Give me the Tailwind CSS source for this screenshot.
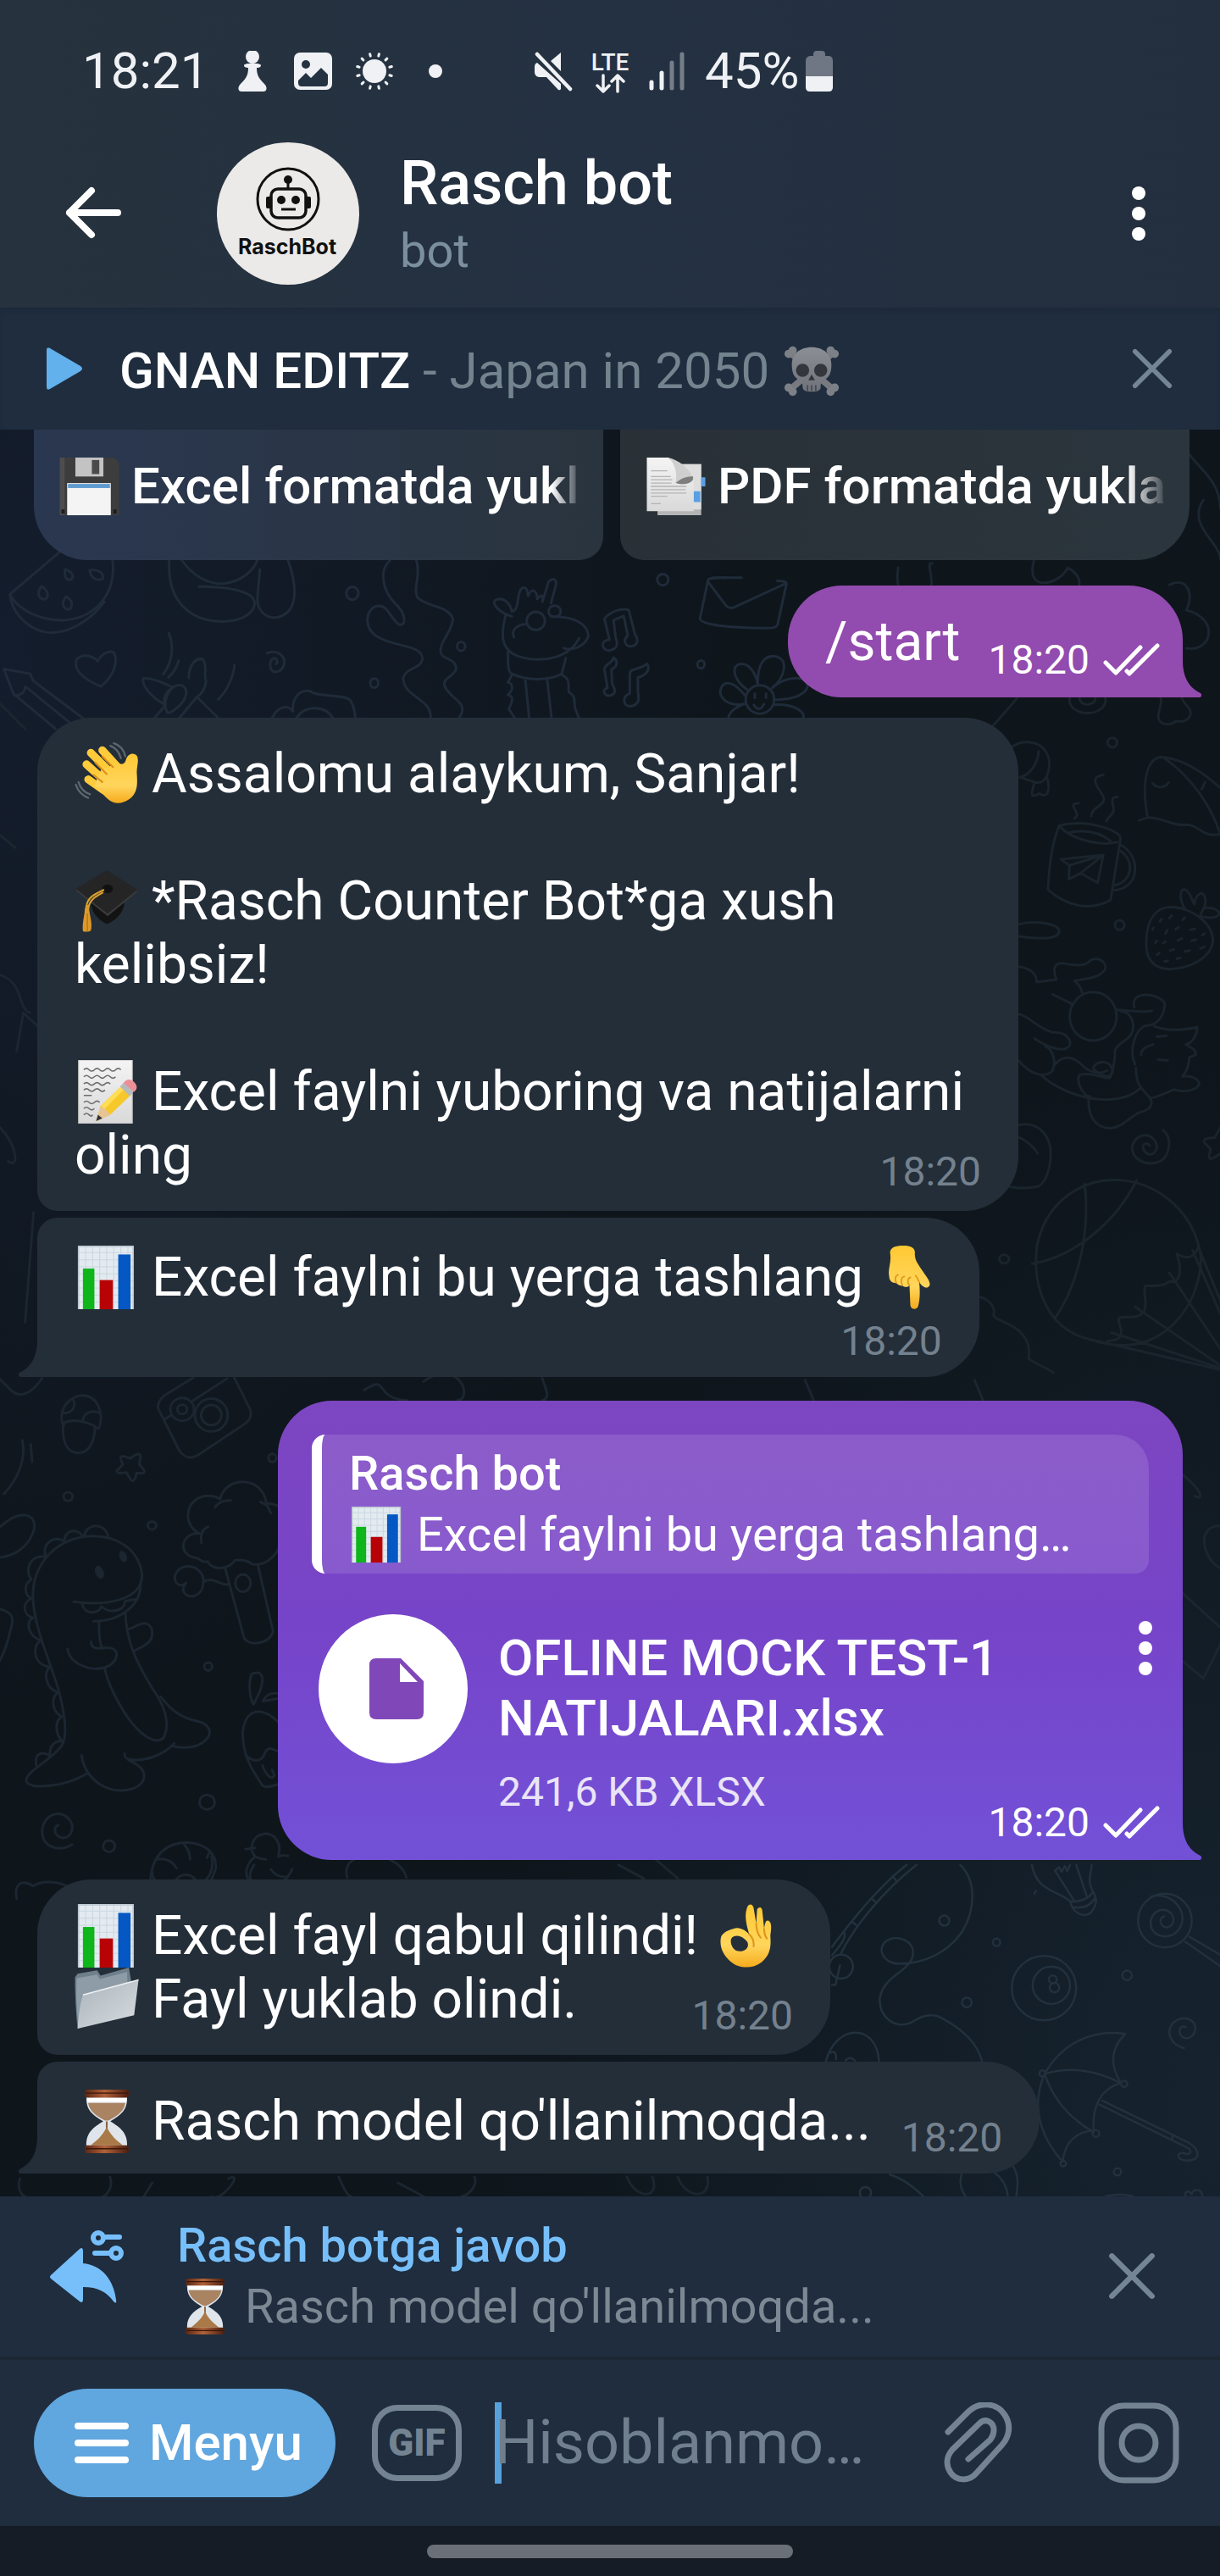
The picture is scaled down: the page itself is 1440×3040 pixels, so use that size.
<!DOCTYPE html>
<html lang="uz">
<head>
<meta charset="utf-8">
<meta name="viewport" content="width=device-width, initial-scale=1">
<title>Rasch bot</title>
<script src="https://cdn.jsdelivr.net/npm/@tailwindcss/browser@4"></script>
</head>
<body class="bg-[#0f161d] font-['Roboto',sans-serif] text-white">

<!-- Shared emoji and icon symbols -->
<svg class="absolute h-0 w-0" aria-hidden="true">
  <defs>
    <linearGradient id="skin" x1="0" y1="0" x2="0" y2="1"><stop offset="0" stop-color="#ffc933"/><stop offset=".65" stop-color="#ffd55c"/><stop offset="1" stop-color="#f6ab1c"/></linearGradient>
    <linearGradient id="silver" x1="0" y1="0" x2="1" y2="1"><stop offset="0" stop-color="#aab4bb"/><stop offset="1" stop-color="#d8dde1"/></linearGradient>
    <linearGradient id="paper" x1="0" y1="0" x2="0" y2="1"><stop offset="0" stop-color="#f4f4f4"/><stop offset="1" stop-color="#d9d9d9"/></linearGradient>
    <linearGradient id="wood" x1="0" y1="0" x2="1" y2="0"><stop offset="0" stop-color="#5a2613"/><stop offset=".45" stop-color="#b0623a"/><stop offset="1" stop-color="#4a1e0f"/></linearGradient>
    <linearGradient id="skullFill" x1="0" y1="0" x2="0" y2="1"><stop offset="0" stop-color="#8b8f95"/><stop offset="1" stop-color="#6f7379"/></linearGradient>
  </defs>
  <symbol id="e-chart" viewBox="0 0 72 72">
    <rect x="4" y="0" width="62" height="72" fill="#e3ebf1"/>
    <path d="M4 8H66M4 16H66M4 24H66M4 32H66M4 40H66M4 48H66M4 56H66M4 64H66M12 0V72M20 0V72M28 0V72M36 0V72M44 0V72M52 0V72M60 0V72" stroke="#cbd6df" stroke-width="1"/>
    <rect x="9" y="26" width="13" height="46" fill="#0eb51b"/><rect x="28" y="39" width="15" height="33" fill="#b80306"/><rect x="49" y="10" width="14" height="62" fill="#0558c3"/>
    <path d="M4 0V72M66 0V72M4 1H66" stroke="#b9c3cb" stroke-width="1.5" fill="none"/>
  </symbol>
  <symbol id="e-floppy" viewBox="0 0 72 72">
    <path d="M0 1H66L72 7V71H0Z" fill="#3d3d3d"/><path d="M0 1H6V71H0Z" fill="#4d4d4d"/>
    <rect x="19" y="1" width="34" height="23" fill="#c3c3c3"/><rect x="39" y="4" width="9" height="17" fill="#4a4a4a"/>
    <rect x="9" y="32" width="53" height="39" fill="#f4f4f4"/><rect x="10" y="33" width="51" height="5" fill="#5f9bd0"/>
    <rect x="2" y="64" width="4" height="5" fill="#1d1d1d"/><rect x="65" y="64" width="4" height="5" fill="#1d1d1d"/>
  </symbol>
  <symbol id="e-docs" viewBox="0 0 72 72">
    <path d="M14 9H67V71H14Z" fill="#b5b5b5"/><path d="M40 9H67V64H40Z" fill="#dedede"/>
    <path d="M67 25h5v11h-5zM56 42h10v13h-10z" fill="#5b9fe3"/>
    <path d="M1 1H27C38 8 42 20 58 27V66H1Z" fill="url(#paper)"/>
    <path d="M27 1C39 4 52 12 58 28C51 35 42 34 36 32C38 20 36 9 27 1Z" fill="#cfcfcf"/><path d="M36 32C40 28 49 23 57 24C59 30 50 36 36 32Z" fill="#7e7e7e"/>
    <path d="M6 17h20M6 24h24M6 28h26M6 32h25M6 36h43M6 40h42M6 44h43M6 48h20M6 57h12" stroke="#b4b4b4" stroke-width="1.3"/>
  </symbol>
  <symbol id="e-wave" viewBox="0 0 72 72">
    <g stroke="#ffcb3a" stroke-width="9" stroke-linecap="round" fill="none"><path d="M15 42L32 54M13 25L34 44M18 12L40 34M31 9L50 30"/></g>
    <path d="M24 44L30 30L50 24C54 26 57 24 58 19C60 13 66 11 70 15C73 20 70 27 70 34C71 48 71 57 62 64C52 71 44 70 37 64L22 50Z" fill="url(#skin)"/>
    <path d="M21 37L31 45M23 23L36 36M31 16L43 28" stroke="#d98e1c" stroke-width="2" stroke-linecap="round" fill="none"/>
    <path d="M40 4C46 6 50 11 52 18M44 1C51 3 56 9 57 16M4 45C6 52 11 57 17 59M1 48C3 55 9 61 15 63" stroke="#5e666e" stroke-width="2.2" fill="none" stroke-linecap="round"/>
  </symbol>
  <symbol id="e-cap" viewBox="0 0 72 72">
    <path d="M18 36C18 48 25 56 36 62C46 58 55 50 56 38Z" fill="#131313"/>
    <path d="M1 22L36 1L71 23L37 50Z" fill="#252525"/><path d="M1 22L37 50L71 23L70 26L37 53L2 25Z" fill="#3a3a3a"/>
    <ellipse cx="37" cy="22" rx="6" ry="5" fill="#111"/>
    <path d="M33 23C22 28 14 32 13 42M32 26C23 31 17 34 15 44" stroke="#d9a02f" stroke-width="2" fill="none"/>
    <path d="M12 41C15 39 17 42 16 45C17 53 20 62 18 69C16 71 12 71 9 70C8 60 11 52 11 46Z" fill="#dd9a2a"/><path d="M14 50V70" stroke="#a96a12"/>
  </symbol>
  <symbol id="e-memo" viewBox="0 0 72 72">
    <rect x="4" y="0" width="61" height="72" fill="url(#paper)" stroke="#bcbcbc"/>
    <path d="M10 11q3-3 6 0t6 0 6 0 6 0 6 0 6 0 6 0M10 19q3-3 6 0t6 0 6 0 6 0 6 0 6 0M10 27q3-3 6 0t6 0 6 0 6 0 6 0M10 34q3-3 6 0t6 0 6 0 6 0M10 40h9M10 48q3-3 6 0t6 0 6 0M10 55q3-3 6 0t6 0M10 62q3-3 6 0t4 0" stroke="#6d6d6d" stroke-width="1.5" fill="none"/>
    <path d="M24 69L29 52L54 28L65 38L40 62Z" fill="#f7c829"/><path d="M29 52L54 28L58 31L33 56Z" fill="#ffdd54"/><path d="M24 69L29 52L34 55L40 62Z" fill="#e6c493"/><path d="M24 69L26 62L31 66Z" fill="#333"/>
    <path d="M51 30L56 25L67 35L62 41Z" fill="#b6babd"/><path d="M55 26C59 20 64 22 67 25C71 29 71 33 67 36Z" fill="#ec8f97"/>
  </symbol>
  <symbol id="e-down" viewBox="0 0 72 72">
    <path d="M14 8C14 2 20 0 29 0C38 0 43 3 42 9C42 18 47 22 53 32C59 40 61 45 57 47C54 49 49 45 47 41C48 51 48 60 46 68C45 73 38 73 37 68L36 45C34 47 31 48 28 45C25 46 22 44 21 42C17 43 13 40 13 35C11 26 16 20 14 8Z" fill="url(#skin)"/>
    <path d="M21 42C19 38 20 34 23 33M28 45C25 40 27 36 30 35M36 45C33 42 34 37 37 36M47 41C45 38 45 36 43 34" stroke="#e19a1b" stroke-width="1.8" fill="none" stroke-linecap="round"/>
  </symbol>
  <symbol id="e-ok" viewBox="0 0 72 72">
    <path d="M24 28C31 25 38 30 42 34C39 24 36 13 40 3C42-1 46 0 47 4L50 22L51 6C54 2 57 4 57 9L59 28C60 21 61 18 64 19C68 21 67 28 66 36C67 48 66 58 56 66C46 74 30 73 22 66C13 59 8 49 10 38C11 33 17 30 24 28ZM24 37C19 39 21 50 28 53C36 55 43 50 40 43C36 38 30 34 24 37Z" fill="url(#skin)" fill-rule="evenodd"/>
    <path d="M50 22C50 28 52 34 55 38M59 28C59 33 60 36 62 39M42 34C46 38 48 42 47 48" stroke="#dd951a" stroke-width="2" fill="none" stroke-linecap="round"/>
  </symbol>
  <symbol id="e-folder" viewBox="0 0 72 72">
    <path d="M3 69C1 50 0 28 0 11L3 7L25 3L29 9L61 0L64 17V50Z" fill="#6f808c"/><path d="M4 68C2 48 1 30 2 12L25 8L28 13L59 5L60 30L10 66Z" fill="#8d9ca6"/>
    <path d="M3 69C4 55 6 39 9 31L72 14L67 54Z" fill="url(#silver)"/><path d="M9 31L72 14" stroke="#eef1f3" stroke-width="1.5"/>
  </symbol>
  <symbol id="e-hourglass" viewBox="0 0 72 72">
    <path d="M13 8H59C60 23 52 29 40 36C52 43 60 50 59 64H13C12 50 20 43 32 36C20 29 12 23 13 8Z" fill="#dfe5ea"/>
    <path d="M15 15H57C56 24 49 29 38 35H34C23 29 16 24 15 15Z" fill="#a98362"/><path d="M14 9H58V14H14Z" fill="#fff"/>
    <path d="M36 36V50" stroke="#8b6240" stroke-width="2"/><path d="M36 42C40 52 48 58 54 63H18C24 58 32 52 36 42Z" fill="#a97948"/>
    <rect x="11" y="0" width="50" height="9" rx="3" fill="url(#wood)"/><rect x="11" y="63" width="50" height="9" rx="3" fill="url(#wood)"/>
    <path d="M12 4H60M12 67H60" stroke="#3a160b" stroke-width="1.3"/>
  </symbol>
  <symbol id="e-skull" viewBox="0 0 72 60">
    <path d="M9 7L63 53M63 7L9 53" stroke="#777b81" stroke-width="8"/>
    <g fill="#7d8187"><circle cx="8" cy="9" r="5"/><circle cx="13" cy="5" r="5"/><circle cx="64" cy="9" r="5"/><circle cx="59" cy="5" r="5"/><circle cx="8" cy="50" r="5"/><circle cx="13" cy="55" r="5"/><circle cx="64" cy="50" r="5"/><circle cx="59" cy="55" r="5"/></g>
    <path d="M36 1C51 1 60 10 60 22C60 31 58 37 52 40C48 42 47 44 47 49C47 54 42 55 36 55C30 55 25 54 25 49C25 44 24 42 20 40C14 37 12 31 12 22C12 10 21 1 36 1Z" fill="url(#skullFill)"/>
    <ellipse cx="25" cy="29" rx="8" ry="8" fill="#33373d"/><ellipse cx="47" cy="29" rx="8" ry="8" fill="#33373d"/><path d="M36 34L32 41H40Z" fill="#33373d"/><path d="M31 47V54M36 47V54M41 47V54" stroke="#44484e" stroke-width="1.6"/>
  </symbol>
  <symbol id="i-checks" viewBox="0 0 68 40">
    <path d="M3 23L15 35L44 5M28 33L31 36L64 3" fill="none" stroke="#fff" stroke-width="5" stroke-linecap="round" stroke-linejoin="round"/>
  </symbol>
  <symbol id="i-more" viewBox="0 0 16 64"><circle cx="8" cy="8" r="8"/><circle cx="8" cy="32" r="8"/><circle cx="8" cy="56" r="8"/></symbol>
  <symbol id="i-close" viewBox="0 0 52 52"><path d="M4 4L48 48M48 4L4 48" fill="none" stroke="#748696" stroke-width="6" stroke-linecap="round"/></symbol>
  <symbol id="i-tail" viewBox="0 0 24 44"><path d="M24 0V44H2C0 44-1 41 1 39C16 32 22 18 22 0Z"/></symbol>
</svg>

<div class="flex min-h-screen flex-col">

  <header class="bg-linear-to-r from-[#26323d] via-[#243142] to-[#232f3e] pb-[27px]">
    <!-- Device status line -->
    <div class="flex items-center pt-[49px] pl-[97px] text-[60px] leading-[70px] text-[#eff1f4]">
      <span class="w-[177px]">18:21</span>
      <div class="flex gap-6">
        <svg class="h-12 w-12" viewBox="0 0 48 48" fill="currentColor" aria-label="Chess"><circle cx="24" cy="7" r="8"/><path d="M14 17C14 14 34 14 34 17C34 20 30 20 29 20C29 29 32 33 38 39C42 43 41 48 37 48H11C7 48 6 43 10 39C16 33 19 29 19 20C18 20 14 20 14 17Z"/></svg>
        <svg class="h-12 w-12" viewBox="0 0 48 48" aria-label="Gallery"><rect x="1" y="2" width="45" height="44" rx="7" fill="currentColor"/><circle cx="15" cy="16" r="5" fill="#253242"/><path d="M6 35L15 26L21 32L33 20L41 28V38Q41 42 37 42H10Q6 42 6 38Z" fill="#253242"/></svg>
        <svg class="h-12 w-12" viewBox="0 0 48 48" aria-label="Weather"><circle cx="24" cy="24" r="14" fill="currentColor"/><path d="M42.500 24H45M40 33.200L42.200 34.500M33.200 40L34.500 42.200M24 42.500V45M14.800 40L13.500 42.200M8 33.200L5.800 34.500M5.500 24H3M8 14.800L5.800 13.500M14.800 8L13.500 5.800M24 5.500V3M33.200 8L34.500 5.800M40 14.800L42.200 13.500" stroke="currentColor" stroke-width="3" stroke-linecap="round" transform="rotate(15 24 24)"/></svg>
        <svg class="h-12 w-12" viewBox="0 0 48 48" fill="currentColor" aria-label="More notifications"><circle cx="24" cy="24" r="8"/></svg>
      </div>
      <div class="ml-[90px] flex items-center gap-5">
        <svg class="h-12 w-12" viewBox="0 0 48 48" fill="currentColor" aria-label="Muted"><path d="M34 2V24L22 12ZM6 14L34 39V45Q33 47 31 46L17 31H8Q3 30 3 25V19Q3 15 6 14Z"/><path d="M6 4L45 45" stroke="currentColor" stroke-width="4.500" stroke-linecap="round"/></svg>
        <div class="flex flex-col items-center pt-1">
          <span class="text-[28px] leading-6 font-medium">LTE</span>
          <svg class="h-6 w-12" viewBox="0 0 40 24" fill="none" stroke="currentColor" stroke-width="3.500" stroke-linecap="round" stroke-linejoin="round"><path d="M12 3V21M5 15L12 22L19 15M29 22V4M22 10L29 3L36 10"/></svg>
        </div>
        <svg class="h-12 w-12" viewBox="0 0 48 48" aria-label="Signal"><g stroke="currentColor" stroke-width="5" stroke-linecap="round"><path d="M5 37V44M17 26V44"/><path d="M29 14V44M41 4V44" opacity=".4"/></g></svg>
        <div class="flex items-center gap-2"><span>45%</span>
        <svg class="h-12 w-8" viewBox="0 0 32 48" aria-label="Battery"><path d="M9 4Q9 0 13 0H19Q23 0 23 4V6H28Q32 7 32 12V30H0V12Q0 7 5 6H9Z" fill="#6e7783"/><path d="M0 30H32V43Q32 48 27 48H5Q0 48 0 43Z" fill="currentColor"/></svg></div>
      </div>
    </div>

    <!-- Chat header -->
    <div class="mt-[49px] flex items-center pr-[88px] pl-[76px]">
      <button type="button" aria-label="Orqaga"><svg class="block h-16 w-[68px]" viewBox="0 0 68 64" fill="none" stroke="#fff" stroke-width="8" stroke-linecap="round" stroke-linejoin="round"><path d="M63 31H6M32 5L6 31L32 57"/></svg></button>
      <svg class="ml-28 h-[168px] w-[168px] shrink-0" viewBox="0 0 168 168" aria-label="RaschBot">
        <circle cx="84" cy="84" r="84" fill="#ebeae8"/>
        <g fill="none" stroke="#111" stroke-width="3"><circle cx="84" cy="67" r="36"/><rect x="64" y="55" width="41" height="34" rx="8" stroke-width="3.500"/><path d="M84 48V55M76 79H93"/></g>
        <g fill="#111"><circle cx="84" cy="44" r="5"/><circle cx="76" cy="68" r="5"/><circle cx="93" cy="68" r="5"/><rect x="58" y="64" width="6" height="14" rx="2"/><rect x="105" y="64" width="6" height="14" rx="2"/></g>
        <text x="83" y="132" text-anchor="middle" font-family="Inter, sans-serif" font-weight="700" font-size="25" fill="#111">RaschBot</text>
      </svg>
      <div class="ml-12 flex flex-1 flex-col gap-1">
        <h1 class="text-[72px] leading-[84px] font-medium">Rasch bot</h1>
        <p class="text-[56px] leading-[66px] text-[#7b8f9e]">bot</p>
      </div>
      <button type="button" aria-label="Yana"><svg class="block h-16 w-4" fill="#fff"><use href="#i-more"/></svg></button>
    </div>
  </header>

  <!-- Audio player strip -->
  <section class="flex h-36 items-center bg-[#1f2d3e] pr-14 pl-[54px] shadow-[inset_0_4px_4px_#1c2a3a]">
    <button type="button" aria-label="Ijro"><svg class="block h-[52px] w-11" viewBox="0 0 44 52" fill="#62b0ec"><path d="M1 4Q1 0 5 2L41 23Q45 26 41 29L5 50Q1 52 1 48Z"/></svg></button>
    <p class="ml-[43px] flex-1 pt-[5px] text-[60px] leading-[70px] whitespace-nowrap text-[#73848f]"><span class="font-medium text-white">GNAN EDITZ</span> - Japan in 2050 <svg class="inline-block h-[60px] w-[70px] align-[-10px]" role="img" aria-label="☠️"><use href="#e-skull"/></svg></p>
    <button type="button" aria-label="Yopish"><svg class="block h-12 w-12"><use href="#i-close"/></svg></button>
  </section>

  <main class="relative isolate flex flex-1 flex-col bg-[#0f161d] pb-[27px]">
    <!-- Doodle wallpaper -->
    <svg class="absolute inset-0 -z-10 h-full w-full" viewBox="0 507 1440 2084" preserveAspectRatio="xMidYMin slice" aria-hidden="true">
      <defs>
        <radialGradient id="wpA" cx="0" cy=".12" r=".6"><stop offset="0" stop-color="#141d2d"/><stop offset="1" stop-color="#141d2d" stop-opacity="0"/></radialGradient>
        <radialGradient id="wpB" cx="1" cy=".95" r=".6"><stop offset="0" stop-color="#16232f"/><stop offset="1" stop-color="#16232f" stop-opacity="0"/></radialGradient>
      </defs>
      <rect y="507" width="1440" height="2084" fill="#0e151b"/><rect y="507" width="1440" height="2084" fill="url(#wpA)"/><rect y="507" width="1440" height="2084" fill="url(#wpB)"/>
      <g fill="none" stroke="#1d2832" stroke-width="3" stroke-linecap="round" stroke-linejoin="round">
        <!-- watermelon, balloon, heart, pencil, llama, notes, envelope, flower -->
        <g transform="translate(0 640) scale(.5995 .3333)" stroke="#1f2b39">
          <path vector-effect="non-scaling-stroke" d="M118 34L20 184C40 250 90 280 130 275C190 265 230 180 222 60M20 184C26 270 70 320 102 320C150 318 190 250 206 210M129 95c14 10 18 25 12 36c-12 6-14-12-12-36zM177 99c18-6 28 10 26 30c-14 10-24-5-26-30zM82 155c12 12 16 35 8 46c-14 2-18-20-8-46zM131 192c12 12 14 32 6 46c-14-2-16-25-6-46z"/>
          <path vector-effect="non-scaling-stroke" d="M334 60C328 200 370 280 440 280C500 275 515 210 490 185C470 165 430 155 392 157M358 62C380 120 410 148 440 146C475 140 500 100 507 62M512 96C510 150 505 200 508 220C515 255 530 268 545 266C590 250 585 150 567 62"/>
          <path vector-effect="non-scaling-stroke" d="M199 510C160 480 145 450 151 415C160 395 180 395 193 420C200 395 215 380 225 390C235 430 220 480 199 510ZM8 448L60 465L66 490L166 625M8 448L28 540C40 545 50 530 50 510M30 540L110 660M52 512L138 638"/>
          <path vector-effect="non-scaling-stroke" d="M333 322C342 360 342 420 322 466M352 418C350 440 340 465 332 478M462 434C460 480 445 530 430 556M282 482C300 475 330 505 341 513C325 530 320 560 326 575C300 550 280 510 282 482ZM341 513C360 490 375 520 362 560C350 590 335 605 330 603C322 580 325 540 341 513ZM372 480C372 430 388 405 400 415C410 440 400 470 406 490C405 520 395 540 388 547L352 625M388 547L432 625M326 577L304 622"/>
          <path vector-effect="non-scaling-stroke" d="M526 392C545 378 562 400 560 430C555 460 540 465 534 450C528 420 540 400 545 415C548 425 546 430 544 430M536 622C545 585 565 570 577 598C575 550 590 520 610 526C625 550 680 535 690 560C700 585 698 610 700 622M584 622C600 575 640 575 656 622"/>
          <path vector-effect="non-scaling-stroke" d="M768 64C745 100 755 170 775 210C805 260 798 300 785 290C765 260 765 225 745 225C720 230 715 300 740 330C770 370 830 360 832 410C830 450 800 440 794 480C795 550 850 550 848 622M820 64C830 120 812 160 822 195C840 230 880 220 892 270C890 320 865 350 868 390C870 415 900 410 898 450C890 480 870 480 876 510C885 550 915 560 910 600L904 622"/>
          <path vector-effect="non-scaling-stroke" d="M1008 262C985 250 968 220 975 205C990 190 1005 215 1008 245C1025 240 1015 170 1030 160C1040 160 1038 180 1040 190C1045 165 1056 160 1058 200C1068 180 1070 190 1068 210L1080 140C1090 120 1098 135 1094 155L1085 215M996 256C985 330 985 390 1030 408C1070 425 1120 410 1140 340M1084 262C1130 260 1160 290 1158 335C1150 370 1125 385 1110 374M1000 388C1000 430 1000 460 1008 465C1035 490 1085 490 1106 465L1114 410M1012 335C1005 310 1020 290 1035 290M1008 470L1000 495C1010 500 1012 520 1000 540C1012 545 1010 560 1002 590L1014 622M1106 468C1125 485 1118 510 1120 530C1135 545 1130 570 1132 585L1140 622M1034 480L1042 622M1077 480L1086 622"/>
          <ellipse vector-effect="non-scaling-stroke" cx="1055" cy="278" rx="18" ry="32"/><ellipse vector-effect="non-scaling-stroke" cx="1092" cy="244" rx="12" ry="20"/>
          <path vector-effect="non-scaling-stroke" d="M1200 345C1180 345 1185 385 1200 383C1220 375 1215 350 1212 335L1208 275L1228 260L1236 330C1225 345 1232 370 1242 368C1260 365 1255 335 1250 325L1238 240C1230 232 1205 238 1190 270L1200 345ZM1196 515C1185 520 1188 545 1202 542C1215 535 1210 515 1205 500L1204 450C1215 440 1218 420 1208 408C1205 430 1190 430 1190 450ZM1240 535C1225 545 1225 580 1242 580C1260 575 1258 550 1256 530V478C1275 470 1280 445 1274 430C1260 450 1240 445 1240 465Z"/>
          <path vector-effect="non-scaling-stroke" d="M1394 132L1378 270C1380 290 1430 305 1520 303C1530 300 1532 290 1532 280L1548 150C1550 138 1540 136 1530 136M1394 132C1400 122 1420 125 1460 125M1394 140L1430 225C1436 236 1445 232 1450 226L1546 146"/>
          <ellipse vector-effect="non-scaling-stroke" cx="1496" cy="556" rx="28" ry="50"/>
          <path vector-effect="non-scaling-stroke" d="M1470 520C1440 480 1440 430 1460 430C1480 430 1490 480 1492 505C1490 430 1505 400 1525 403C1555 410 1545 480 1520 515C1550 470 1590 470 1590 510C1585 545 1550 560 1524 556M1524 575C1560 570 1590 600 1580 625M1466 540C1440 480 1418 490 1418 535C1425 570 1445 580 1468 570C1445 585 1435 605 1434 622M1486 535V550M1508 535V550M1484 575Q1495 605 1504 572"/>
          <ellipse vector-effect="non-scaling-stroke" cx="694" cy="180" rx="12" ry="23"/><ellipse vector-effect="non-scaling-stroke" cx="908" cy="368" rx="8" ry="16"/><ellipse vector-effect="non-scaling-stroke" cx="737" cy="498" rx="8" ry="16"/><ellipse vector-effect="non-scaling-stroke" cx="1305" cy="132" rx="11" ry="20"/><ellipse vector-effect="non-scaling-stroke" cx="1380" cy="432" rx="7" ry="14"/>
        </g>
        <!-- mug, whale, strawberry, cat, beach ball -->
        <g transform="translate(1150 820) scale(.3333 .5102)" stroke="#1a242c">
          <path vector-effect="non-scaling-stroke" d="M130 122C180 95 265 110 265 160C262 195 240 205 215 202L160 190C200 185 225 155 227 130M212 203C195 240 205 235 230 228C255 240 270 225 258 192M62 74L150 8"/>
          <path vector-effect="non-scaling-stroke" d="M300 302C270 350 265 400 260 450C330 490 410 500 482 474L516 335C530 315 400 285 300 302C340 335 450 350 505 340M335 318C400 310 450 320 482 338M516 346C590 370 590 450 488 452M514 360C570 380 560 435 492 440M306 380L456 370L436 434L376 412L334 426L336 394ZM336 394L456 370L376 412M354 285C380 275 340 260 352 252L368 250M414 280C410 260 470 255 456 235C440 215 400 190 456 185M466 292C480 275 500 275 490 255C485 240 490 235 506 236"/>
          <path vector-effect="non-scaling-stroke" d="M612 280C590 200 610 140 670 144C750 150 820 185 870 215M672 146C770 190 840 260 870 322C800 330 800 300 750 300C700 305 660 280 612 284L582 290M630 204C650 218 675 215 687 202M804 218L816 202"/>
          <path vector-effect="non-scaling-stroke" d="M608 570C610 520 640 490 700 490C780 495 845 530 844 570C835 610 760 632 690 634C630 632 605 610 608 570ZM745 494C720 470 730 445 745 450C765 455 770 475 778 484C785 455 815 450 818 475C818 490 805 500 800 508M818 492C850 490 870 500 865 508C850 518 825 515 800 512M630 542L634 538M656 524L662 518M690 516L698 510M736 520L744 515M676 552L682 544M712 542L722 537M764 543L780 541M806 555L814 552M640 573L646 568M668 574L676 570M720 567L734 563M768 568L784 566M646 601L654 596M692 591L706 588M744 593L762 591M800 586L814 582M672 616L684 615M716 610L728 608"/>
          <path vector-effect="non-scaling-stroke" d="M156 530C220 520 300 530 300 546C300 565 240 565 156 558M156 628C200 632 220 645 220 664L290 658C280 640 275 620 310 620C350 625 390 630 410 614C440 602 470 620 462 635C440 655 400 655 354 661C370 670 380 680 382 692M276 692L344 714M504 728C560 730 600 735 628 730M566 722C555 700 585 690 625 694C660 700 680 710 672 722C670 745 640 765 610 764C570 770 545 820 568 854M636 766C660 772 700 780 788 768C790 785 770 805 748 808L778 820L784 832L760 838C760 860 745 875 736 882C770 878 790 888 796 898C790 915 740 920 706 912C660 925 625 935 620 930C580 905 570 890 572 862M156 738C190 740 230 775 280 780C330 780 345 800 335 812C320 825 270 820 212 794M156 845C200 880 250 885 275 870C290 850 280 820 250 812M234 878C320 930 500 960 586 910M404 928C400 980 430 1000 480 1002C530 1000 560 965 600 962C630 955 630 940 622 934M278 862C300 835 340 830 380 855C400 870 440 880 470 868M374 878C420 870 460 890 480 885C500 850 495 840 498 820C520 795 560 800 562 765C560 745 540 730 520 732M420 862C430 845 480 840 490 870C480 890 440 880 420 862ZM370 880C360 900 390 930 410 928M646 790L680 788M650 843L684 845M590 832C590 820 600 815 632 808"/>
          <ellipse vector-effect="non-scaling-stroke" cx="420" cy="743" rx="83" ry="56"/>
          <path vector-effect="non-scaling-stroke" d="M156 994C230 985 270 1020 270 1062C268 1110 240 1135 220 1137C180 1142 140 1140 120 1136M156 1022Q200 1035 224 1060M668 1006C700 1020 695 1070 650 1080C600 1090 550 1070 560 1040C575 1010 640 1010 646 1045C640 1070 600 1065 596 1045C600 1035 615 1035 620 1042M870 1000L850 1024C820 1022 805 1030 816 1036L836 1050C825 1075 830 1080 870 1060"/>
          <path vector-effect="non-scaling-stroke" d="M410 1490C270 1470 200 1380 222 1270C260 1160 400 1115 520 1122C660 1130 780 1200 802 1300C800 1410 680 1500 540 1503C490 1505 450 1500 410 1490ZM390 1130C410 1240 370 1360 284 1442M574 1122C500 1220 350 1300 204 1315M716 1292C740 1300 770 1310 792 1278M716 1292C740 1340 720 1360 692 1356C660 1370 630 1365 604 1366C595 1390 615 1400 600 1425C580 1445 540 1435 512 1440C505 1455 525 1460 518 1480C510 1492 490 1492 470 1494M772 1284L870 1430M792 1276L870 1400M690 1336L870 1512M568 1414L870 1550M484 1474L870 1556M410 1490L870 1560M18 1392C50 1395 75 1415 68 1432C60 1450 190 1450 194 1520C190 1540 175 1530 280 1566"/>
          <ellipse vector-effect="non-scaling-stroke" cx="488" cy="110" rx="17" ry="11"/><ellipse vector-effect="non-scaling-stroke" cx="514" cy="532" rx="17" ry="11"/><ellipse vector-effect="non-scaling-stroke" cx="105" cy="1304" rx="17" ry="10"/><ellipse vector-effect="non-scaling-stroke" cx="400" cy="12" rx="64" ry="30"/><ellipse vector-effect="non-scaling-stroke" cx="400" cy="8" rx="28" ry="14"/>
          <path vector-effect="non-scaling-stroke" d="M660 8C665 25 645 40 652 55C665 75 700 68 715 60C745 65 765 55 765 40C760 22 745 30 730 0"/>
        </g>
        <!-- acorn, camera, star, dinosaur, broccoli, carrot, spiral, duck -->
        <g transform="translate(0 1620) scale(.3333 .3954)" stroke="#1b2630">
          <path vector-effect="non-scaling-stroke" d="M0 18L45 55C70 72 110 65 150 15M225 158C200 100 260 65 295 66C350 68 365 120 355 155C352 168 345 168 340 160C300 140 260 138 232 146C225 155 222 160 225 185C230 225 255 238 280 238C320 235 335 200 338 160M224 118C255 122 270 100 262 82M294 140C300 115 330 110 352 118M80 200C95 260 60 320 15 360M110 212L115 265"/>
          <path vector-effect="non-scaling-stroke" d="M685 13L580 68C555 90 558 105 565 112L635 230C655 255 680 255 700 245L870 150C892 135 892 120 885 105L830 13M805 16L680 84M584 137L606 126"/>
          <ellipse vector-effect="non-scaling-stroke" cx="646" cy="108" rx="42" ry="34"/><ellipse vector-effect="non-scaling-stroke" cx="646" cy="108" rx="17" ry="14"/><ellipse vector-effect="non-scaling-stroke" cx="749" cy="125" rx="58" ry="49"/><ellipse vector-effect="non-scaling-stroke" cx="749" cy="125" rx="36" ry="30"/>
          <path vector-effect="non-scaling-stroke" d="M462 254C490 235 500 240 498 252L494 272C515 290 518 300 500 298L484 298C480 325 468 325 462 315L448 296C415 302 408 292 418 288L436 272C425 255 425 245 440 248Z"/>
          <path vector-effect="non-scaling-stroke" d="M0 460C60 410 130 410 122 465C105 520 50 545 0 550M0 703C50 715 50 735 40 760C30 800 15 835 0 858"/>
          <path vector-effect="non-scaling-stroke" d="M262 682C370 695 505 680 504 600C490 520 410 485 325 486C200 490 110 570 118 680C130 780 180 860 210 950C240 1050 235 1090 220 1110C190 1150 90 1190 94 1215C100 1245 230 1235 308 1195M332 740C430 740 500 690 498 630M292 690C300 720 350 720 360 696C380 715 440 715 444 680L484 674M444 714C450 780 460 830 540 940C590 1000 600 1050 582 1085C560 1110 500 1090 440 1010C395 950 375 900 372 880M352 742C350 780 352 800 362 820C400 815 415 825 414 842C405 880 350 885 320 880C270 870 245 850 240 822M362 820C340 822 325 820 323 802M455 763C480 760 490 745 515 746C545 750 545 785 530 800C515 815 490 820 478 828M570 965C610 1010 650 1030 700 1038C740 1045 750 1070 738 1085C720 1110 670 1125 610 1112M618 1104C580 1140 510 1160 460 1152C445 1150 442 1145 442 1135M456 1154C500 1170 520 1190 508 1215C490 1245 430 1250 390 1240C330 1225 295 1180 290 1140"/>
          <path vector-effect="non-scaling-stroke" d="M384 486C370 445 310 445 298 486M290 482C270 465 235 465 228 500C190 485 150 505 162 548C110 540 85 585 112 615C85 630 85 660 112 672C80 685 80 720 118 730C90 740 100 785 146 797C115 810 115 870 178 876C155 890 160 940 206 952C180 970 185 1010 220 1024C190 1040 200 1085 224 1098C195 1095 175 1110 178 1142C150 1125 120 1135 130 1170"/>
          <ellipse cx="353" cy="594" rx="13" ry="20" fill="#1b2630" transform="rotate(-30 353 594)"/><ellipse cx="437" cy="547" rx="11" ry="17" fill="#1b2630" transform="rotate(-30 437 547)"/>
          <path vector-effect="non-scaling-stroke" d="M706 478C640 450 660 365 740 366C760 366 770 370 780 376C800 305 930 305 944 388C960 388 975 392 990 398M762 400C775 385 790 378 818 380M922 384L946 394L960 418M706 478C640 475 625 545 700 552C715 560 730 565 736 562C760 595 820 580 832 558C860 555 880 560 895 570C940 575 970 550 990 520M738 458C715 465 710 485 714 506M798 582L865 790C885 815 950 810 968 772L914 572M808 630C780 635 760 605 722 622C720 570 635 560 620 605C618 630 640 640 660 626C635 650 660 670 690 664C715 655 722 640 720 622"/>
          <ellipse vector-effect="non-scaling-stroke" cx="861" cy="626" rx="27" ry="26"/>
          <path vector-effect="non-scaling-stroke" d="M898 988C880 960 880 895 900 895C945 885 935 935 898 988ZM932 978C950 950 970 955 990 955M990 970L932 978M990 1045C930 990 870 1000 860 1070C860 1150 900 1190 930 1230C945 1240 970 1230 990 1225M878 1145C900 1160 930 1160 940 1130C955 1110 965 1125 990 1128M930 1170C940 1195 965 1220 972 1198L964 1184"/>
          <path vector-effect="non-scaling-stroke" d="M256 1406C210 1430 150 1415 150 1365C155 1310 230 1295 256 1345C262 1380 230 1395 205 1380C190 1370 195 1350 208 1348M534 1510C540 1430 600 1400 665 1400C740 1405 770 1440 764 1480L750 1510M560 1450C590 1445 615 1460 625 1476M652 1404C668 1420 674 1435 674 1450M744 1425L734 1446M626 1510C640 1492 675 1492 692 1510M986 1440C1000 1400 970 1372 940 1374C890 1378 880 1425 905 1442C875 1460 865 1490 880 1510M905 1442C920 1450 930 1450 942 1450M870 1420L904 1416M960 1480C975 1500 1000 1504 1020 1502M986 1442C1000 1436 1010 1438 1020 1440M60 1568C50 1520 80 1510 118 1530C150 1512 200 1515 240 1530"/>
          <ellipse vector-effect="non-scaling-stroke" cx="242" cy="368" rx="16" ry="13"/><ellipse vector-effect="non-scaling-stroke" cx="539" cy="454" rx="15" ry="12"/><ellipse vector-effect="non-scaling-stroke" cx="965" cy="253" rx="14" ry="12"/><ellipse vector-effect="non-scaling-stroke" cx="738" cy="875" rx="14" ry="12"/><ellipse vector-effect="non-scaling-stroke" cx="734" cy="1280" rx="27" ry="22"/><ellipse vector-effect="non-scaling-stroke" cx="387" cy="1411" rx="21" ry="17"/>
        </g>
        <!-- fishing rod, bulb, lollipop, billiard ball, umbrella -->
        <g transform="translate(960 2200) scale(.33333)" stroke="#22313d" stroke-width="7.500">
          <path d="M66 290C140 190 240 70 330 0M98 312C150 210 250 90 365 0M280 40L292 54M208 120L220 132M136 200L152 214M66 320C90 290 115 265 110 240M66 425L78 425L94 355M520 0C580 60 570 160 530 230C480 310 390 350 300 350C240 345 225 290 260 268C300 245 360 270 352 320C340 380 250 390 235 470C230 540 290 580 340 560C380 540 400 525 440 535C530 580 580 630 597 695M44 695C80 560 225 560 232 695M62 664Q82 655 80 688M114 692Q130 675 146 692"/>
          <circle cx="98" cy="360" r="42"/><circle cx="463" cy="197" r="18"/><circle cx="648" cy="274" r="13"/><circle cx="543" cy="487" r="17"/><circle cx="1110" cy="391" r="17"/><circle cx="1076" cy="1086" r="13"/>
          <path d="M773 0C790 90 850 85 908 128C920 175 960 190 985 165C1010 130 1000 115 988 92C970 60 980 40 985 0M855 20L922 126M930 0L968 112M855 20L870 8L878 24L890 4L898 22L908 0M912 130C950 130 975 120 990 95M922 150C960 155 985 140 998 115M788 92L782 102"/>
          <circle cx="1244" cy="197" r="95"/><path d="M1195 112C1260 95 1315 150 1305 200C1295 260 1220 270 1197 225C1180 175 1230 140 1265 170C1290 200 1260 235 1235 215C1222 200 1230 185 1242 182M1330 254L1440 318M1316 272L1440 358"/>
          <circle cx="816" cy="436" r="114"/><circle cx="842" cy="426" r="66"/><circle cx="847" cy="405" r="14"/><circle cx="853" cy="434" r="17"/>
          <path d="M1312 648C1270 640 1250 600 1265 570C1290 530 1350 535 1352 580C1348 620 1300 625 1296 590C1296 575 1305 568 1318 574"/>
          <path d="M818 740C880 630 990 580 1104 598C1050 650 1050 710 1088 772C1020 790 985 850 992 940C930 945 890 980 882 1050C800 960 770 850 818 740ZM818 740C910 710 1010 730 1088 772M818 740C850 830 910 900 992 945M1022 834L1330 984C1370 1010 1370 1045 1325 1046C1280 1045 1285 1015 1310 1020C1335 1030 1345 1010 1318 998L1012 848M1274 956L1268 970"/>
          <circle cx="811" cy="738" r="11"/><circle cx="1100" cy="775" r="11"/><circle cx="1000" cy="950" r="12"/><circle cx="884" cy="1057" r="10"/>
          <path d="M524 1096C515 1130 525 1155 538 1172M705 1064C730 1100 722 1140 718 1172M640 1088C670 1110 685 1140 688 1172M270 1096C320 1110 360 1145 388 1172M1036 1172Q1080 1160 1130 1172M1318 1172C1310 1155 1330 1150 1338 1165C1345 1145 1375 1145 1376 1172"/><circle cx="184" cy="1160" r="20"/>
        </g>
        <!-- pieces showing in the gutters -->
        <path d="M1395 520C1400 545 1440 560 1440 600M1420 590C1400 620 1440 640 1440 660M1060 670C1055 700 1070 710 1090 695C1110 700 1090 660 1100 665M1220 662C1210 700 1250 690 1260 670C1280 680 1275 700 1265 700M1380 690C1400 680 1410 700 1400 720C1440 730 1430 770 1400 765M0 830L30 860M0 985L18 1000M0 1150C30 1160 20 1190 36 1195M20 1240L28 1195L44 1210M0 1330C20 1350 24 1380 10 1370M40 1430L30 1560M180 2205C175 2240 260 2240 250 2190M300 2200C280 2230 330 2240 345 2205M410 2215C400 2180 470 2180 480 2215M730 2200L760 2216M800 2216L770 2190M24 2570C20 2580 25 2590 30 2591M130 2568C135 2580 125 2591 122 2591M180 2575L170 2591M270 2570C290 2560 260 2600 250 2591M400 2568C405 2580 410 2591 415 2591M470 2575L500 2591M560 2568C565 2580 550 2591 545 2591M740 2568C750 2595 780 2595 770 2568M800 2568C810 2595 840 2595 835 2568M430 1640C460 1620 440 1650 480 1652M500 1630C540 1600 560 1650 540 1652M640 1626C645 1640 650 1650 640 1652M950 1628C955 1640 960 1650 960 1652M1150 1628L1160 1652M1396 1740C1420 1760 1420 1770 1410 1765M1440 1800C1410 1800 1420 1840 1440 1850M1396 1880L1440 1920M1396 1960L1420 1980L1440 1940" stroke="#1b2630"/>
      </g>
    </svg>

    <!-- Inline keyboard, partly scrolled under the bar -->
    <div class="grid grid-cols-2 gap-5 pr-9 pl-10 text-[60px] leading-[70px] font-medium">
      <button type="button" class="rounded-br-[28px] rounded-bl-[64px] bg-linear-to-r from-[#2a3750] to-[#2a343e] pt-8 pr-6 pb-[52px] pl-[30px] text-left"><span class="block whitespace-nowrap [mask-image:linear-gradient(to_right,#000_94%,transparent)]"><svg class="mr-[14px] inline-block h-[70px] w-[71px] align-top" role="img" aria-label="💾"><use href="#e-floppy"/></svg>Excel formatda yukl</span></button>
      <button type="button" class="rounded-br-[64px] rounded-bl-[28px] bg-linear-to-r from-[#293137] to-[#2b353d] pt-8 pr-6 pb-[52px] pl-[30px] text-left"><span class="block whitespace-nowrap [mask-image:linear-gradient(to_right,#000_92%,transparent)]"><svg class="mr-[14px] inline-block h-[70px] w-[71px] align-top" role="img" aria-label="📑"><use href="#e-docs"/></svg>PDF formatda yukla</span></button>
    </div>

    <div class="mt-[30px] flex flex-1 flex-col items-start pr-11 pl-11 text-[64px] leading-[75px]">

      <article class="relative flex items-end self-end rounded-[64px] rounded-br-none bg-[#924bae] pt-[29px] pr-[26px] pb-7 pl-11">
        <p>/start</p>
        <div class="-mb-1 ml-[33px] flex items-center gap-4 text-[48px] leading-9"><time>18:20</time><svg class="h-10 w-[68px]"><use href="#i-checks"/></svg></div>
        <svg class="absolute bottom-0 -right-[22px] h-11 w-6 -scale-x-100" fill="#924bae" aria-hidden="true"><use href="#i-tail"/></svg>
      </article>

      <article class="mt-6 w-[1158px] max-w-full rounded-[64px] rounded-bl-[24px] bg-[#232e39] pt-[29px] pr-11 pb-7 pl-11">
        <p><svg class="mr-[15px] inline-block h-[75px] w-[76px] align-top" role="img" aria-label="👋"><use href="#e-wave"/></svg>Assalomu alaykum, Sanjar!</p>
        <p class="mt-[75px]"><svg class="mr-[15px] inline-block h-[75px] w-[76px] align-top" role="img" aria-label="🎓"><use href="#e-cap"/></svg>*Rasch Counter Bot*ga xush kelibsiz!</p>
        <p class="mt-[75px]"><svg class="mr-[15px] inline-block h-[75px] w-[76px] align-top" role="img" aria-label="📝"><use href="#e-memo"/></svg>Excel faylni yuboring va natijalarni</p>
        <div class="flex items-end justify-between"><p>oling</p><time class="text-[48px] leading-9 text-[#74818e]">18:20</time></div>
      </article>

      <article class="relative mt-2 flex flex-col rounded-[64px] rounded-tl-[24px] rounded-bl-none bg-[#232e39] pt-[33px] pr-11 pb-6 pl-11">
        <p><svg class="mr-[15px] inline-block h-[75px] w-[76px] align-top" role="img" aria-label="📊"><use href="#e-chart"/></svg>Excel faylni bu yerga tashlang <svg class="inline-block h-[75px] w-[77px] align-top" role="img" aria-label="👇"><use href="#e-down"/></svg></p>
        <time class="mt-5 self-end text-[48px] leading-9 text-[#74818e]">18:20</time>
        <svg class="absolute bottom-0 -left-[22px] h-11 w-6" fill="#232e39" aria-hidden="true"><use href="#i-tail"/></svg>
      </article>

      <article class="relative mt-7 flex w-[1068px] max-w-full flex-col self-end rounded-[64px] rounded-br-none bg-linear-to-b from-[#7d46c1] via-[#7644c9] to-[#7251d7] pt-10 pr-[26px] pb-6 pl-10">
        <blockquote class="mr-[14px] overflow-hidden rounded-[16px] rounded-tr-[40px] border-l-[12px] border-white bg-white/12 py-[10px] pr-6 pl-8 text-[56px] leading-[72px]">
          <p class="font-medium">Rasch bot</p>
          <p class="truncate"><svg class="mr-[14px] inline-block h-[66px] w-[66px] align-[-14px]" role="img" aria-label="📊"><use href="#e-chart"/></svg>Excel faylni bu yerga tashlang…</p>
        </blockquote>
        <div class="mt-12 flex items-start pl-2">
          <button type="button" aria-label="Faylni ochish" class="flex h-44 w-44 shrink-0 items-center justify-center rounded-full bg-white"><svg class="ml-2 h-[72px] w-16" viewBox="0 0 64 72" fill="#8047b9"><path d="M8 0H37L64 27V64Q64 72 56 72H8Q0 72 0 64V8Q0 0 8 0ZM36 6V28H57Z" fill-rule="evenodd"/></svg></button>
          <div class="ml-9 flex-1 pt-4">
            <p class="text-[60px] leading-[71px] font-medium">OFLINE MOCK TEST-1<br>NATIJALARI.xlsx</p>
            <p class="mt-6 text-[48px] leading-[56px] text-white/85">241,6 KB XLSX</p>
          </div>
          <button type="button" aria-label="Yana" class="mt-2 mr-[10px]"><svg class="block h-16 w-4" fill="#fff"><use href="#i-more"/></svg></button>
        </div>
        <div class="-mt-3 flex items-center gap-4 self-end text-[48px] leading-9"><time>18:20</time><svg class="h-10 w-[68px]"><use href="#i-checks"/></svg></div>
        <svg class="absolute bottom-0 -right-[22px] h-11 w-6 -scale-x-100" fill="#7251d7" aria-hidden="true"><use href="#i-tail"/></svg>
      </article>

      <article class="mt-[23px] rounded-[64px] rounded-bl-[24px] bg-[#232e39] px-11 pt-[29px] pb-7">
        <p class="pr-5"><svg class="mr-[15px] inline-block h-[75px] w-[76px] align-top" role="img" aria-label="📊"><use href="#e-chart"/></svg>Excel fayl qabul qilindi! <svg class="inline-block h-[75px] w-[76px] align-top" role="img" aria-label="👌"><use href="#e-ok"/></svg></p>
        <div class="flex items-end justify-between"><p><svg class="mr-[15px] inline-block h-[75px] w-[76px] align-top" role="img" aria-label="📂"><use href="#e-folder"/></svg>Fayl yuklab olindi.</p><time class="text-[48px] leading-9 text-[#74818e]">18:20</time></div>
      </article>

      <article class="relative mt-2 flex items-end rounded-[64px] rounded-tl-[24px] rounded-bl-none bg-[#232e39] pt-[33px] pr-11 pb-6 pl-11">
        <p><svg class="mr-[15px] inline-block h-[75px] w-[76px] align-top" role="img" aria-label="⏳"><use href="#e-hourglass"/></svg>Rasch model qo'llanilmoqda...</p>
        <time class="ml-9 text-[48px] leading-9 text-[#74818e]">18:20</time>
        <svg class="absolute bottom-0 -left-[22px] h-11 w-6" fill="#232e39" aria-hidden="true"><use href="#i-tail"/></svg>
      </article>
    </div>
  </main>

  <!-- Reply preview -->
  <section class="flex items-start border-b-4 border-[#1d2732] bg-[#1f2d3e] pt-[22px] pr-[76px] pb-[23px] pl-[58px] text-[56px] leading-[72px]">
    <svg class="mt-[18px] h-[92px] w-[90px] shrink-0" viewBox="0 0 90 92" aria-label="Javob">
      <path d="M2 53L36 22Q40 19 40 25V39C62 41 76 58 79 82Q80 88 76 84C68 73 58 67 40 67V81Q40 87 36 84L2 57Q0 55 2 53Z" fill="#77bffa"/>
      <g fill="none" stroke="#77bffa" stroke-width="6" stroke-linecap="round"><circle cx="58" cy="9" r="6"/><path d="M66 8H83M54 27H70"/><circle cx="79" cy="27" r="6"/></g>
    </svg>
    <div class="ml-[61px] flex-1">
      <p class="font-medium text-[#77bffa]">Rasch botga javob</p>
      <p class="text-[#7c8994]"><svg class="mr-[14px] inline-block h-[66px] w-[66px] align-[-14px]" role="img" aria-label="⏳"><use href="#e-hourglass"/></svg>Rasch model qo'llanilmoqda...</p>
    </div>
    <button type="button" aria-label="Bekor qilish" class="self-center"><svg class="block h-14 w-14"><use href="#i-close"/></svg></button>
  </section>

  <!-- Composer -->
  <footer>
    <form class="flex h-[196px] items-center bg-[#1f2d3e] pr-12 pl-10">
      <button type="button" class="flex h-32 w-[356px] shrink-0 items-center rounded-full bg-[#60a6df] pl-12 text-[60px] leading-[70px] font-medium">
        <svg class="mr-6 h-14 w-16" viewBox="0 0 64 56" stroke="#fff" stroke-width="8" stroke-linecap="round"><path d="M4 8H60M4 28H60M4 48H60"/></svg>Menyu
      </button>
      <button type="button" aria-label="GIF" class="ml-[43px] flex h-[90px] w-[106px] shrink-0 items-center justify-center rounded-[30px] border-[7px] border-[#738391] text-[44px] leading-none font-black text-[#738391]">GIF</button>
      <div class="ml-[39px] h-24 w-2 shrink-0 bg-[#57a1dc]"></div>
      <input type="text" aria-label="Xabar" placeholder="Hisoblanmo…" class="-ml-2 h-24 min-w-0 flex-1 bg-transparent text-[72px] text-white placeholder-[#6f7f8d] outline-none">
      <button type="button" aria-label="Fayl biriktirish"><svg class="block h-24 w-[84px]" viewBox="0 0 84 96" fill="none" stroke="#738391" stroke-width="7" stroke-linecap="round"><path d="M6 35L30 11C44-2 64 1 73 15C81 27 78 41 70 50L40 83C31 94 16 93 9 83C3 74 4 64 11 56L43 25C50 18 60 23 60 33C60 38 59 40 56 44L30 67"/></svg></button>
      <button type="button" aria-label="Kamera" class="ml-[99px]"><svg class="block h-24 w-24" viewBox="0 0 96 96" fill="none" stroke="#738391" stroke-width="7"><rect x="4" y="4" width="88" height="88" rx="26"/><circle cx="48" cy="48" r="20"/></svg></button>
    </form>
    <div class="flex h-[60px] items-center justify-center bg-[#151c25]"><div class="h-4 w-[30%] rounded-full bg-[#6b6f78]"></div></div>
  </footer>
</div>
</body>
</html>
